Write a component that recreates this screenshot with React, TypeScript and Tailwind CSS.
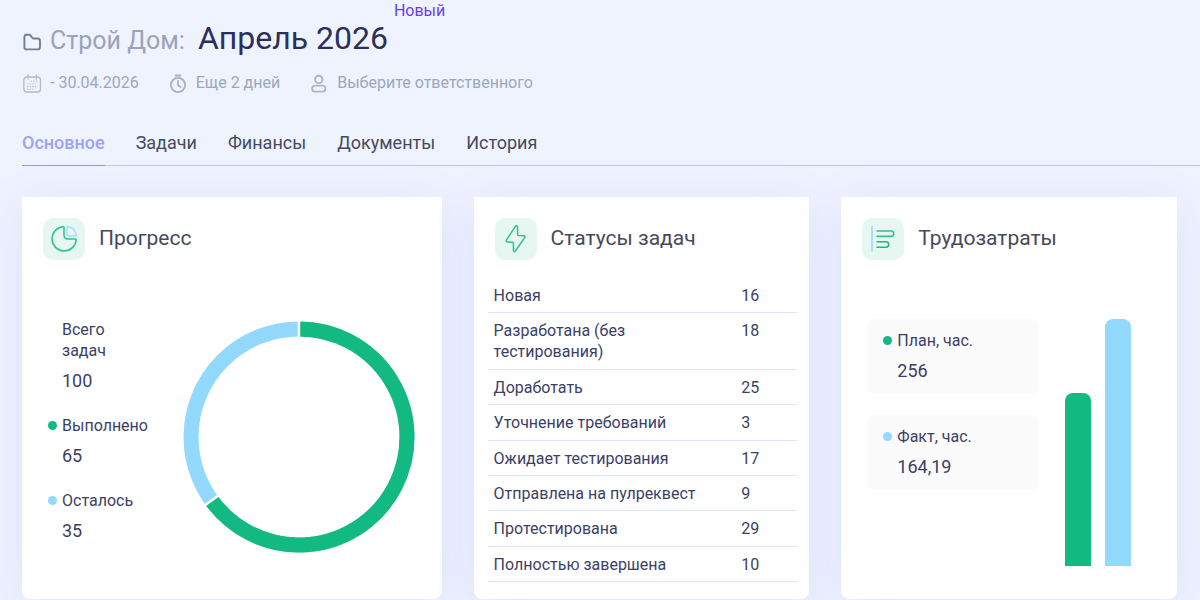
import { useState } from "react";
import type { ReactNode } from "react";

const tabs = ["Основное", "Задачи", "Финансы", "Документы", "История"];

const statuses = [
  { name: "Новая", count: 16 },
  { name: "Разработана (без тестирования)", count: 18 },
  { name: "Доработать", count: 25 },
  { name: "Уточнение требований", count: 3 },
  { name: "Ожидает тестирования", count: 17 },
  { name: "Отправлена на пулреквест", count: 9 },
  { name: "Протестирована", count: 29 },
  { name: "Полностью завершена", count: 10 },
];

const progress = { total: 100, done: 65, left: 35 };

function FolderIcon() {
  return (
    <svg className="mr-2 mb-1.5 size-5 shrink-0 self-end" viewBox="0 0 20 20" fill="none" stroke="#6f7f98" strokeWidth="1.9" strokeLinejoin="round">
      <path d="M2.4 5.2Q2.4 2.8 4.6 2.8H7Q8.4 2.8 9.2 4.2L9.8 5.3Q10.4 6.5 11.8 6.5H15.6Q18 6.5 18 8.9V15Q18 17.4 15.6 17.4H4.8Q2.4 17.4 2.4 15Z" />
    </svg>
  );
}

function CalendarIcon() {
  return (
    <svg className="size-5 shrink-0" viewBox="0 0 20 20" fill="none" stroke="#b4bccd">
      <rect x="1.9" y="4" width="16.6" height="15" rx="3" strokeWidth="1.4" />
      <path d="M6 2v4M14.4 2v4" strokeWidth="1.3" strokeLinecap="round" />
      <path d="M8.5 8.3h7M5 11h10.5M5 13.6h10.5M5 16.2h7.5" strokeWidth="1.1" strokeDasharray="1.4 1.2" />
    </svg>
  );
}

function TimerIcon() {
  return (
    <svg className="size-5 shrink-0" viewBox="0 0 20 20" fill="none" stroke="#a9b3c8">
      <circle cx="10" cy="12" r="7.1" strokeWidth="1.9" />
      <path d="M6.8 2.5h6.4" strokeWidth="2" />
      <path d="M10 8v4.2l2.6 1.8" strokeWidth="1.8" strokeLinecap="round" strokeLinejoin="round" />
    </svg>
  );
}

function UserIcon() {
  return (
    <svg className="size-5 shrink-0" viewBox="0 0 20 20" fill="none" stroke="#adb6c8" strokeWidth="1.9">
      <circle cx="9.8" cy="6.4" r="3.7" />
      <rect x="3.2" y="12.6" width="13.2" height="6" rx="2.9" />
    </svg>
  );
}

function PieIcon() {
  return (
    <svg className="size-7" viewBox="0 0 28 28" fill="none" strokeWidth="1.5" strokeLinejoin="round">
      <path d="M14 2.6Q14.1 1.7 13 1.8A12.1 12.1 0 1 0 26.2 15Q26.3 14 25.4 14H18Q14 14 14 10Z" stroke="#2fc18f" />
      <path d="M17 2.3Q17 1.4 18 1.6A10.5 10.5 0 0 1 26.3 9.8Q26.5 10.8 25.6 10.8H19.2Q17 10.8 17 8.6Z" stroke="#a5defa" />
    </svg>
  );
}

function BoltIcon() {
  return (
    <svg className="size-7" viewBox="0 0 28 28" fill="none" stroke="#2fc18f" strokeWidth="1.5" strokeLinejoin="round">
      <path d="M13.2 1.6 4.4 15.2Q3.6 16.8 5.4 16.9L10.4 17.2Q11.4 17.3 11.4 18.4V25.4Q12 27.6 13.4 26L22.8 12.4Q23.6 10.9 22 10.8L16.6 10.4Q15.6 10.3 15.6 9.2V2.2Q14.8-.3 13.2 1.6Z" />
    </svg>
  );
}

function BarsIcon() {
  return (
    <svg className="size-7" viewBox="0 0 28 28" fill="none" strokeWidth="1.6" strokeLinecap="round">
      <path d="M3 1.5v25" stroke="#a5defa" strokeWidth="1.9" strokeLinecap="butt" />
      <path d="M8 6h14a2.7 2.7 0 0 1 0 5.4H8" stroke="#2fc18f" />
      <path d="M8 16.8h9a2.7 2.7 0 0 1 0 5.4H8" stroke="#17bb84" />
    </svg>
  );
}

function Card({ title, icon, children }: { title: string; icon: ReactNode; children: ReactNode }) {
  return (
    <section className="flex flex-col rounded-b-lg bg-white pt-[21px] shadow-[0_8px_48px_#dde0fc]">
      <div className="flex items-start gap-[14px] px-[21px]">
        <span className="flex size-[42px] items-center justify-center rounded-[10px] bg-[#e6f7f1]">{icon}</span>
        <h2 className="text-[21px] leading-10 text-[#454a5c]">{title}</h2>
      </div>
      {children}
    </section>
  );
}

function Metric({ label, value, dot }: { label: string; value: string | number; dot: string }) {
  return (
    <div className="grid grid-cols-[9px_auto] items-center gap-x-[5px] gap-y-2">
      <span className={`size-[9px] rounded-full ${dot}`} />
      <dt>{label}</dt>
      <dd className="col-start-2 text-lg leading-6">{value}</dd>
    </div>
  );
}

function Donut({ done, total }: { done: number; total: number }) {
  const angle = (done / total) * 2 * Math.PI;
  const r = 108;
  const x = 118 + r * Math.sin(angle);
  const y = 118 - r * Math.cos(angle);
  const edgeX = 118 + 117 * Math.sin(angle);
  const edgeY = 118 - 117 * Math.cos(angle);

  return (
    <svg className="w-[236px] shrink-0" viewBox="0 0 236 236" fill="none" role="img" aria-label={`${done} из ${total}`}>
      <circle cx="118" cy="118" r={r} stroke="#93d8fd" strokeWidth="15" />
      <path d={`M118 10A${r} ${r} 0 1 1 ${x} ${y}`} stroke="#12b981" strokeWidth="15" />
      <path d={`M118 0V118L${edgeX} ${edgeY}`} stroke="#fff" strokeWidth="2.4" />
    </svg>
  );
}

export default function App() {
  const [active, setActive] = useState(tabs[0]);

  return (
    <main className="min-h-screen overflow-hidden bg-[#eff3fe] pb-px pl-[22px] font-[Roboto,sans-serif] text-base leading-[21px] text-[#3b3f66]">
      <header>
        <div className="flex items-start">
          <div className="flex items-baseline pt-[18px]">
            <FolderIcon />
            <span className="text-[25px] leading-8 text-[#97a4bb]">Строй Дом:</span>
            <h1 className="ml-[13px] text-[32px] leading-10 text-[#2c2f5b]">Апрель 2026</h1>
          </div>
          <span className="ml-[6px] leading-[22px] text-[#6a3df5]">Новый</span>
        </div>

        <div className="mt-[13px] flex items-center gap-[29px] leading-6 text-[#9ba7bd]">
          <span className="flex items-center gap-2">
            <CalendarIcon />- 30.04.2026
          </span>
          <span className="flex items-center gap-2">
            <TimerIcon />
            Еще 2 дней
          </span>
          <button type="button" className="flex items-center gap-2">
            <UserIcon />
            Выберите ответственного
          </button>
        </div>
      </header>

      <nav className="mt-9 flex gap-[31px] border-b border-[#c0c5e6] text-lg leading-6">
        {tabs.map((tab) => (
          <button
            key={tab}
            type="button"
            onClick={() => setActive(tab)}
            className={
              tab === active
                ? "-mb-px border-b border-[#8f94f0] pb-[10px] font-medium text-[#9da2f7]"
                : "-mb-px border-b border-transparent pb-[10px] text-[#454a5c]"
            }
          >
            {tab}
          </button>
        ))}
      </nav>

      <div className="mt-[31px] mr-[23px] grid grid-cols-[5fr_4fr_4fr] gap-8">
        <Card title="Прогресс" icon={<PieIcon />}>
          <div className="flex items-start justify-between pt-[59px] pr-[25px] pb-11 pl-[26px]">
            <dl className="flex flex-col gap-[22px]">
              <div className="flex w-20 flex-col gap-2 pl-[14px]">
                <dt>Всего задач</dt>
                <dd className="text-lg leading-6">{progress.total}</dd>
              </div>
              <Metric label="Выполнено" value={progress.done} dot="bg-[#12b981]" />
              <Metric label="Осталось" value={progress.left} dot="bg-[#93d8fd]" />
            </dl>
            <Donut done={progress.done} total={progress.total} />
          </div>
        </Card>

        <Card title="Статусы задач" icon={<BoltIcon />}>
          <table className="mt-[18px] mr-3 ml-[14px] h-[304px] border-separate border-spacing-0">
            <tbody>
              {statuses.map((status) => (
                <tr key={status.name}>
                  <td className="border-b border-[#dfe3f6] pt-[7px] pr-7 pb-[6px] pl-[6px] align-top">{status.name}</td>
                  <td className="w-14 border-b border-[#dfe3f6] pt-[7px] pb-[6px] align-top">{status.count}</td>
                </tr>
              ))}
            </tbody>
          </table>
        </Card>

        <Card title="Трудозатраты" icon={<BarsIcon />}>
          <div className="flex items-start justify-between gap-[27px] pt-[59px] pr-[46px] pb-[33px] pl-[26px]">
            <dl className="flex flex-1 flex-col gap-[21px]">
              <div className="rounded-md bg-[#fbfbfb] px-4 py-[11px]">
                <Metric label="План, час." value="256" dot="bg-[#12b981]" />
              </div>
              <div className="rounded-md bg-[#fbfbfb] px-4 py-[11px]">
                <Metric label="Факт, час." value="164,19" dot="bg-[#93d8fd]" />
              </div>
            </dl>
            <div className="flex h-[247px] items-end gap-[14px]">
              <div className="h-[70%] w-[26px] rounded-t-lg bg-[#12b981]" />
              <div className="h-full w-[26px] rounded-t-lg bg-[#93d8fd]" />
            </div>
          </div>
        </Card>
      </div>
    </main>
  );
}
